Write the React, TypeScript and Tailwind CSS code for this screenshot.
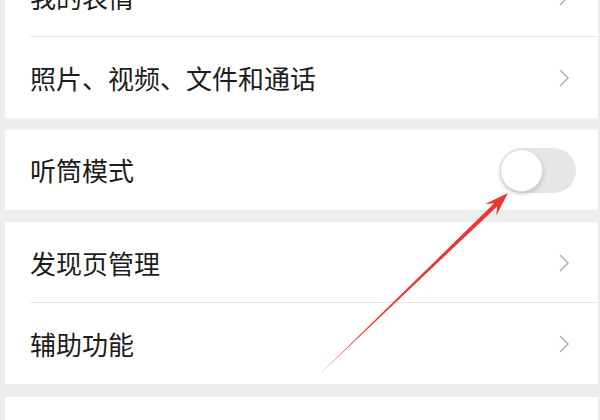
const font = { fontFamily: '"Noto Sans CJK SC", "Noto Sans", sans-serif' };

function Chevron() {
  return (
    <svg width="12" height="20" viewBox="0 0 12 20" className="shrink-0">
      <polyline points="2,2 10,10 2,18" fill="none" stroke="#b3b3b3" strokeWidth="1.6" />
    </svg>
  );
}

function Row({ label, divider }: { label: string; divider?: boolean }) {
  return (
    <div className="relative flex h-[81px] items-center justify-between pl-[25px] pr-[28px]">
      <span className="text-[26px] leading-none text-[#1c1c1c]">{label}</span>
      <Chevron />
      {divider && <div className="absolute bottom-0 left-[25px] right-0 h-px bg-[#e8e8e8]" />}
    </div>
  );
}

function Toggle() {
  return (
    <div className="relative h-[45px] w-[76px] rounded-full bg-[#e6e6e6]">
      <div className="absolute left-0 top-[1px] h-[43px] w-[43px] rounded-full border border-[#dcdcdc] bg-white shadow-[0_2px_4px_rgba(0,0,0,0.2)]" />
    </div>
  );
}

export default function App() {
  return (
    <div className="relative h-[420px] w-[600px] overflow-hidden bg-[#ededed] pl-[5px] pr-[2px]" style={font}>
      <div className="-mt-[44px] bg-white">
        <Row label="我的表情" divider />
        <Row label="照片、视频、文件和通话" />
      </div>
      <div className="mt-[12px] flex h-[80px] items-center justify-between bg-white pl-[25px] pr-[22px]">
        <span className="text-[26px] leading-none text-[#1c1c1c]">听筒模式</span>
        <Toggle />
      </div>
      <div className="mt-[12px] bg-white">
        <Row label="发现页管理" divider />
        <Row label="辅助功能" />
      </div>
      <div className="mt-[13px] h-[40px] bg-white" />

      <svg className="pointer-events-none absolute left-0 top-0" width="600" height="420" viewBox="0 0 600 420">
        <polygon
          points="321.8,372.2 497.2,206.4 496.3,215.5 508,193 485.1,203.9 494.2,203.2 322.2,371.8"
          fill="#ee3535"
        />
      </svg>
    </div>
  );
}
